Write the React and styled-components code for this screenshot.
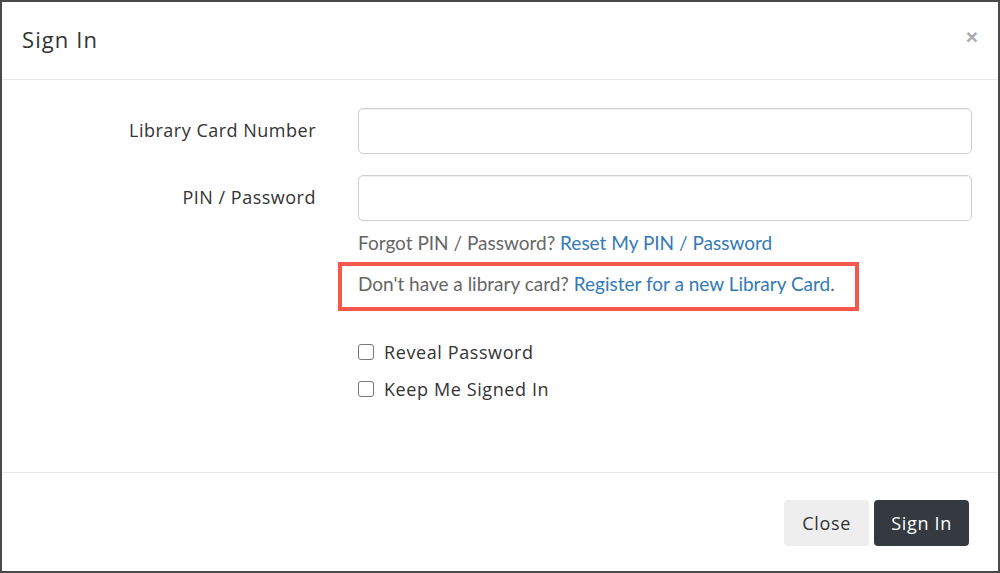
import React from "react";
import styled, { createGlobalStyle } from "styled-components";

const GlobalStyle = createGlobalStyle`
  html, body {
    margin: 0;
    padding: 0;
    background: #ffffff;
  }
  * {
    box-sizing: border-box;
  }
`;

const Modal = styled.div`
  width: 1000px;
  height: 573px;
  border: 2px solid #4a4a4a;
  background: #fff;
  display: flex;
  flex-direction: column;
  font-family: "Open Sans", Lato, sans-serif;
  color: #333;
`;

const Header = styled.div`
  height: 78px;
  flex: none;
  display: flex;
  align-items: center;
  justify-content: space-between;
  padding: 0 20px 4px 20px;
  border-bottom: 1px solid #e5e5e5;
`;

const Title = styled.h4`
  margin: 0;
  font-size: 22px;
  font-weight: 400;
  color: #333;
  letter-spacing: 1.1px;
`;

const CloseX = styled.button`
  border: none;
  background: none;
  padding: 0;
  margin-top: -4px;
  font-size: 21px;
  font-weight: 700;
  color: #aaa;
  font-family: "Liberation Sans", Arial, sans-serif;
  line-height: 1;
  cursor: pointer;
`;

const Body = styled.div`
  flex: 1;
  padding: 28px 26px 0 0;
  display: flex;
  flex-direction: column;
`;

const FormRow = styled.div`
  display: grid;
  grid-template-columns: 314px 1fr;
  column-gap: 42px;
  align-items: center;
  margin-bottom: ${(p) => p.gap || 0}px;
`;

const Label = styled.label`
  text-align: right;
  font-size: 18px;
  letter-spacing: 0.5px;
  color: #333;
  margin-top: -2px;
`;

const Input = styled.input`
  height: 46px;
  width: 100%;
  border: 1px solid #cfcfcf;
  border-radius: 5px;
  box-shadow: inset 0 1px 1px rgba(0, 0, 0, 0.06);
  font-size: 16px;
  padding: 0 12px;
`;

const HelpBlock = styled.div`
  margin-left: 356px;
  font-family: Lato, sans-serif;
  font-size: 19px;
  color: #666;
`;

const HelpLine = styled.p`
  margin: 0;
  line-height: 24px;
`;

const Highlight = styled.div`
  margin: 7px 0 0 -20px;
  width: 521px;
  height: 49px;
  border: 4px solid #f8574b;
  padding: 0 0 6px 16px;
  display: flex;
  align-items: center;
`;

const Link = styled.a`
  color: #337ab7;
  text-decoration: none;
`;

const Checks = styled.div`
  margin: 29px 0 0 356px;
  display: flex;
  flex-direction: column;
  gap: 13px;
`;

const CheckLabel = styled.label`
  display: flex;
  align-items: center;
  gap: 10px;
  font-size: 18px;
  letter-spacing: 0.6px;
  color: #333;
`;

const Box = styled.span`
  width: 16px;
  height: 16px;
  border: 1px solid #777;
  border-radius: 3px;
  background: #fff;
  flex: none;
`;

const Footer = styled.div`
  height: 99px;
  flex: none;
  border-top: 1px solid #e5e5e5;
  display: flex;
  justify-content: flex-end;
  align-items: flex-start;
  gap: 5px;
  padding: 27px 29px 0 0;
`;

const Button = styled.button`
  height: 46px;
  padding: 0 ${(p) => (p.primary ? 17 : 18)}px;
  border: none;
  border-radius: 4px;
  font-family: "Open Sans", Lato, sans-serif;
  font-size: 18px;
  letter-spacing: 0.7px;
  background: ${(p) => (p.primary ? "#343a40" : "#eeeeee")};
  color: ${(p) => (p.primary ? "#fff" : "#333")};
  cursor: pointer;
`;

export default function App() {
  return (
    <>
      <GlobalStyle />
      <Modal>
        <Header>
          <Title>Sign In</Title>
          <CloseX aria-label="Close">×</CloseX>
        </Header>
        <Body>
          <FormRow gap={21}>
            <Label>Library Card Number</Label>
            <Input type="text" />
          </FormRow>
          <FormRow gap={10}>
            <Label>PIN / Password</Label>
            <Input type="password" />
          </FormRow>
          <HelpBlock>
            <HelpLine>
              Forgot PIN / Password? <Link href="#">Reset My PIN / Password</Link>
            </HelpLine>
            <Highlight>
              <HelpLine>
                Don't have a library card?{" "}
                <Link href="#">Register for a new Library Card</Link>.
              </HelpLine>
            </Highlight>
          </HelpBlock>
          <Checks>
            <CheckLabel>
              <Box />
              Reveal Password
            </CheckLabel>
            <CheckLabel>
              <Box />
              Keep Me Signed In
            </CheckLabel>
          </Checks>
        </Body>
        <Footer>
          <Button>Close</Button>
          <Button primary>Sign In</Button>
        </Footer>
      </Modal>
    </>
  );
}
